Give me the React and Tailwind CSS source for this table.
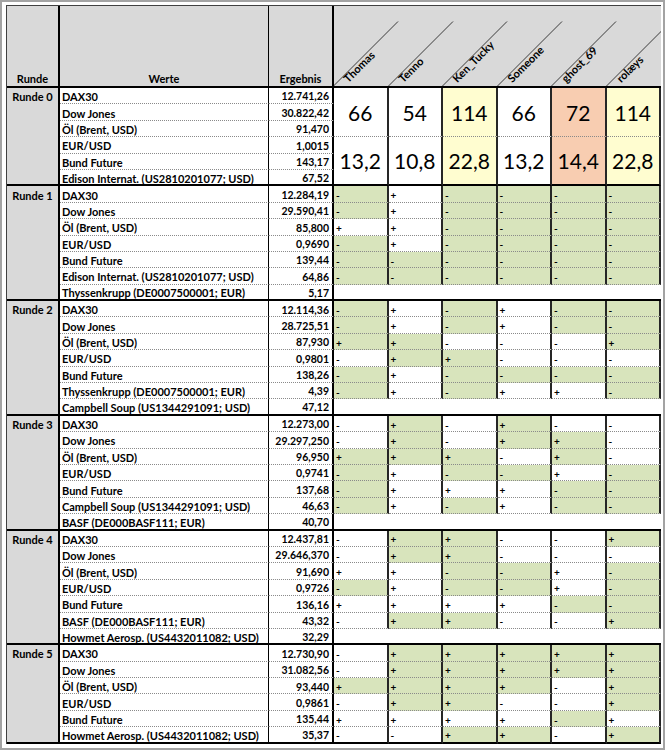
import React from 'react';

const PLAYERS = ['Thomas', 'Tenno', 'Ken_Tucky', 'Someone', 'ghost_69', 'rolæys'];

const SCORES = [
  { total: '66', avg: '13,2', bg: 'bg-white' },
  { total: '54', avg: '10,8', bg: 'bg-white' },
  { total: '114', avg: '22,8', bg: 'bg-[#fffdd0]' },
  { total: '66', avg: '13,2', bg: 'bg-white' },
  { total: '72', avg: '14,4', bg: 'bg-[#f8cdb1]' },
  { total: '114', avg: '22,8', bg: 'bg-[#fffdd0]' },
];

const ROUND0 = [
  ['DAX30', '12.741,26'],
  ['Dow Jones', '30.822,42'],
  ['Öl (Brent, USD)', '91,470'],
  ['EUR/USD', '1,0015'],
  ['Bund Future', '143,17'],
  ['Edison Internat. (US2810201077; USD)', '67,52'],
];

// [Wert, Ergebnis, tatsächliche Richtung, Tipps der 6 Spieler]
const ROUNDS = [
  {
    label: 'Runde 1',
    rows: [
      ['DAX30', '12.284,19', '-', '-+----'],
      ['Dow Jones', '29.590,41', '-', '-+----'],
      ['Öl (Brent, USD)', '85,800', '-', '++----'],
      ['EUR/USD', '0,9690', '-', '-+----'],
      ['Bund Future', '139,44', '-', '------'],
      ['Edison Internat. (US2810201077; USD)', '64,86', '-', '------'],
      ['Thyssenkrupp (DE0007500001; EUR)', '5,17'],
    ],
  },
  {
    label: 'Runde 2',
    rows: [
      ['DAX30', '12.114,36', '-', '-+-+--'],
      ['Dow Jones', '28.725,51', '-', '-+-+--'],
      ['Öl (Brent, USD)', '87,930', '+', '++---+'],
      ['EUR/USD', '0,9801', '+', '-++---'],
      ['Bund Future', '138,26', '-', '-+----'],
      ['Thyssenkrupp (DE0007500001; EUR)', '4,39', '-', '-+-++-'],
      ['Campbell Soup (US1344291091; USD)', '47,12'],
    ],
  },
  {
    label: 'Runde 3',
    rows: [
      ['DAX30', '12.273,00', '+', '-+-+--'],
      ['Dow Jones', '29.297,250', '+', '-+-++-'],
      ['Öl (Brent, USD)', '96,950', '+', '+++-+-'],
      ['EUR/USD', '0,9741', '-', '-+--+-'],
      ['Bund Future', '137,68', '-', '-+++--'],
      ['Campbell Soup (US1344291091; USD)', '46,63', '-', '-+-+--'],
      ['BASF (DE000BASF111; EUR)', '40,70'],
    ],
  },
  {
    label: 'Runde 4',
    rows: [
      ['DAX30', '12.437,81', '+', '-++--+'],
      ['Dow Jones', '29.646,370', '+', '-++---'],
      ['Öl (Brent, USD)', '91,690', '-', '++--+-'],
      ['EUR/USD', '0,9726', '-', '-+--+-'],
      ['Bund Future', '136,16', '-', '++++--'],
      ['BASF (DE000BASF111; EUR)', '43,32', '+', '-++--+'],
      ['Howmet Aerosp. (US4432011082; USD)', '32,29'],
    ],
  },
  {
    label: 'Runde 5',
    rows: [
      ['DAX30', '12.730,90', '+', '-+++++'],
      ['Dow Jones', '31.082,56', '+', '-+++++'],
      ['Öl (Brent, USD)', '93,440', '+', '++++-+'],
      ['EUR/USD', '0,9861', '+', '-++--+'],
      ['Bund Future', '135,44', '-', '++++-+'],
      ['Howmet Aerosp. (US4432011082; USD)', '35,37', '+', '--++-+'],
    ],
  },
];

const SPAN = { 6: 'row-span-6', 7: 'row-span-7' };

const rowEnd = (last) =>
  last
    ? 'border-b-2 border-b-black'
    : 'border-b [border-bottom-style:dotted] border-b-[#8a8a8a]';

function RundeCell({ label, rows }) {
  return (
    <div className={`${SPAN[rows]} bg-[#d9d9d9] border-r-2 border-r-black border-b-2 border-b-black`}>
      <div className="h-[15.4px] flex items-center justify-center pt-[2px] text-[11px] font-bold">{label}</div>
    </div>
  );
}

function ValueCells({ name, value, last }) {
  return (
    <>
      <div className={`flex items-center pl-[2px] pt-[2px] text-[11px] font-bold whitespace-nowrap overflow-hidden border-r border-r-black ${rowEnd(last)}`}>
        {name}
      </div>
      <div className={`flex items-center justify-end pr-[3px] pt-[2px] text-[10.5px] font-bold border-r-2 border-r-black ${rowEnd(last)}`}>
        {value}
      </div>
    </>
  );
}

function TipCell({ tip, hit, last }) {
  return (
    <div
      className={`flex items-center pl-[2px] pt-[2px] text-[10px] font-bold border-r-2 border-r-[#262626] ${rowEnd(last)} ${
        hit ? 'bg-[#d8e4bc]' : 'bg-white'
      }`}
    >
      {tip}
    </div>
  );
}

function Header() {
  return (
    <>
      <div className="flex items-end justify-center pb-[2px] text-[11px] font-bold bg-[#d9d9d9] border-r-2 border-r-black border-b-2 border-b-black">
        Runde
      </div>
      <div className="flex items-end justify-center pb-[2px] text-[11px] font-bold bg-[#d9d9d9] border-r border-r-black border-b-2 border-b-black">
        Werte
      </div>
      <div className="flex items-end justify-center pb-[2px] text-[11px] font-bold bg-[#d9d9d9] border-r-2 border-r-black border-b-2 border-b-black">
        Ergebnis
      </div>
      <div className="col-span-6 grid grid-cols-6 bg-[#d9d9d9] border-b-2 border-b-black overflow-hidden">
        {PLAYERS.map((p) => (
          <div key={p} className="relative">
            <svg className="absolute left-0 top-0 overflow-visible" width="65" height="80">
              <line x1="-1" y1="80.5" x2="64" y2="15.5" stroke="#3a3a3a" strokeWidth="1" />
            </svg>
            <span className="absolute left-[15px] bottom-[2px] origin-bottom-left -rotate-45 whitespace-nowrap text-[11px] font-bold leading-none">
              {p}
            </span>
          </div>
        ))}
      </div>
    </>
  );
}

export default function App() {
  return (
    <div className="w-[665px] h-[750px] overflow-hidden bg-white border-2 border-[#a3a3a3] pl-[4px] pt-[3px] font-[Lato,sans-serif] text-[10px] leading-none text-black">
      <div className="grid grid-cols-[53px_209px_65px_repeat(6,54.5px)] grid-rows-[82px_repeat(40,16.4px)] w-max border-l border-t border-[#404040]">
        <Header />

        {/* Runde 0: Startwerte und Punktestand */}
        <RundeCell label="Runde 0" rows={6} />
        {ROUND0.map(([name, value], i) => (
          <React.Fragment key={name}>
            <ValueCells name={name} value={value} last={i === 5} />
            {(i === 0 || i === 3) &&
              SCORES.map((s, j) => (
                <div
                  key={j}
                  className={`row-span-3 flex items-center justify-center text-[21px] font-normal border-r-2 border-r-[#262626] ${s.bg} ${rowEnd(
                    i === 3
                  )}`}
                >
                  {i === 0 ? s.total : s.avg}
                </div>
              ))}
          </React.Fragment>
        ))}

        {ROUNDS.map((round) => (
          <React.Fragment key={round.label}>
            <RundeCell label={round.label} rows={round.rows.length} />
            {round.rows.map(([name, value, dir, tips], i) => {
              const last = i === round.rows.length - 1;
              return (
                <React.Fragment key={name}>
                  <ValueCells name={name} value={value} last={last} />
                  {tips ? (
                    tips
                      .split('')
                      .map((t, j) => <TipCell key={j} tip={t} hit={t === dir} last={last} />)
                  ) : (
                    <div className="col-span-6 bg-white border-b-2 border-b-black" />
                  )}
                </React.Fragment>
              );
            })}
          </React.Fragment>
        ))}
      </div>
    </div>
  );
}
